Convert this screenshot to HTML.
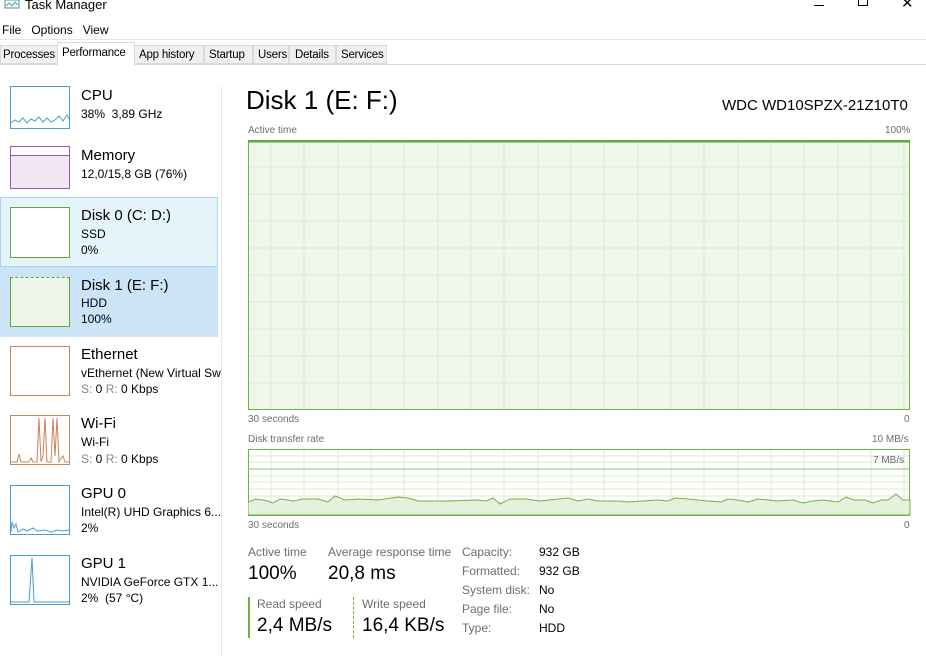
<!DOCTYPE html>
<html><head><meta charset="utf-8"><style>
*{margin:0;padding:0;box-sizing:border-box}
body{width:926px;height:667px;background:#fff;font-family:"Liberation Sans",sans-serif;color:#000;position:relative;overflow:hidden;font-size:12px}
.a{position:absolute;white-space:nowrap}
.tab{position:absolute;top:45px;height:19px;background:#f0f0f0;border:1px solid #d9d9d9;font-size:11.5px;padding:3px 0 0 2px;letter-spacing:-0.2px}
.box{position:absolute;left:10px;width:60px;height:43px;border:1px solid}
.t1{font-size:15px}
.t2{font-size:12px}
.g{color:#6d6d6d;font-size:11px}
</style></head><body>
<svg class="a" style="left:4px;top:0" width="16" height="10"><rect x="1" y="0" width="14" height="8" fill="none" stroke="#5a8ab0"/><polyline points="2,6 5,3 8,6 11,2 14,5" fill="none" stroke="#3a7" stroke-width="1"/></svg>
<div class="a" style="left:25px;top:-3px;font-size:13px">Task Manager</div>
<div class="a" style="left:814px;top:5px;width:10px;border-top:1px solid #000"></div>
<div class="a" style="left:858px;top:-4px;width:10px;height:10px;border:1px solid #000"></div>
<div class="a" style="left:901px;top:-6px;font-size:15px">✕</div>
<div class="a" style="left:2px;top:23px;font-size:12px">File&nbsp;&nbsp;&nbsp;Options&nbsp;&nbsp;&nbsp;View</div>
<div class="a" style="left:0;top:39px;width:926px;border-top:1px solid #e5e5e5"></div>
<div class="a" style="left:0;top:64px;width:926px;border-top:1px solid #d9d9d9"></div>
<div class="tab" style="left:0;width:58px">Processes</div>
<div class="tab" style="left:57px;top:42px;height:23px;width:78px;background:#fff;border-bottom:none;padding-top:4px;padding-left:4px">Performance</div>
<div class="tab" style="left:134px;width:70px;padding-left:4px">App history</div>
<div class="tab" style="left:204px;width:49px;padding-left:4px">Startup</div>
<div class="tab" style="left:253px;width:36px;padding-left:4px">Users</div>
<div class="tab" style="left:289px;width:47px;padding-left:5px">Details</div>
<div class="tab" style="left:336px;width:51px;padding-left:4px">Services</div>

<div class="a" style="left:221px;top:86px;height:570px;border-left:1px solid #e6e6e6"></div>
<div class="a" style="left:0;top:197px;width:218px;height:70px;background:#e5f3fb;border:1px solid #a8d3ee"></div>
<div class="a" style="left:0;top:267px;width:218px;height:70px;background:#cce4f7"></div>

<div class="box" style="top:86px;border-color:#4a9bd6;background:#fff"><svg width="58" height="41"><polyline points="0,36 4,33 8,35 12,31 16,36 20,32 24,34 28,30 32,35 36,31 40,35 44,33 48,29 52,34 56,28 58,32" fill="none" stroke="#4a9bd6"/></svg></div>
<div class="a t1" style="left:81px;top:87px">CPU</div><div class="a t2" style="left:81px;top:107px">38%&nbsp; 3,89 GHz</div>

<div class="box" style="top:146px;border-color:#a64dbd;background:#fff"><div style="position:absolute;left:0;right:0;top:8px;bottom:0;background:#f1e6f4;border-top:1px solid #a64dbd"></div></div>
<div class="a t1" style="left:81px;top:147px">Memory</div><div class="a t2" style="left:81px;top:167px">12,0/15,8 GB (76%)</div>

<div class="box" style="top:207px;border-color:#5ea83a;background:#fff;height:51px"></div>
<div class="a t1" style="left:81px;top:207px">Disk 0 (C: D:)</div><div class="a t2" style="left:81px;top:227px">SSD</div><div class="a t2" style="left:81px;top:243px">0%</div>

<div class="box" style="top:277px;border-color:#5ea83a;background:#eef6e9;height:50px;border-top:1px dashed #5ea83a"></div>
<div class="a t1" style="left:81px;top:277px">Disk 1 (E: F:)</div><div class="a t2" style="left:81px;top:296px">HDD</div><div class="a t2" style="left:81px;top:312px">100%</div>

<div class="box" style="top:346px;border-color:#c9845a;background:#fff;height:50px"></div>
<div class="a t1" style="left:81px;top:346px">Ethernet</div><div class="a t2" style="left:81px;top:366px;width:140px;overflow:hidden">vEthernet (New Virtual Switch)</div><div class="a t2" style="left:81px;top:382px"><span style="color:#888">S:</span> 0 <span style="color:#888">R:</span> 0 Kbps</div>

<div class="box" style="top:415px;border-color:#c9845a;background:#fff;height:50px"><svg width="58" height="48"><polyline points="0,46 6,46 8,38 10,46 18,46 20,42 22,46 26,46 28,2 30,46 32,40 34,2 36,46 40,46 42,2 44,40 46,2 48,46 52,40 54,46 58,46" fill="none" stroke="#c9845a"/></svg></div>
<div class="a t1" style="left:81px;top:415px">Wi-Fi</div><div class="a t2" style="left:81px;top:435px">Wi-Fi</div><div class="a t2" style="left:81px;top:452px"><span style="color:#888">S:</span> 0 <span style="color:#888">R:</span> 0 Kbps</div>

<div class="box" style="top:485px;border-color:#4a9bd6;background:#fff;height:50px"><svg width="58" height="48"><polyline points="0,46 1,36 3,42 5,38 7,46 12,43 16,45 22,42 26,45 34,44 40,46 46,44 52,45 58,44" fill="none" stroke="#4a9bd6"/></svg></div>
<div class="a t1" style="left:81px;top:485px">GPU 0</div><div class="a t2" style="left:81px;top:505px">Intel(R) UHD Graphics 6...</div><div class="a t2" style="left:81px;top:521px">2%</div>

<div class="box" style="top:555px;border-color:#4a9bd6;background:#fff;height:50px"><svg width="58" height="48"><polyline points="0,46 18,46 21,2 23,46 58,46" fill="none" stroke="#4a9bd6"/></svg></div>
<div class="a t1" style="left:81px;top:555px">GPU 1</div><div class="a t2" style="left:81px;top:575px">NVIDIA GeForce GTX 1...</div><div class="a t2" style="left:81px;top:591px">2%&nbsp; (57 °C)</div>

<div class="a" style="left:246px;top:85px;font-size:26px">Disk 1 (E: F:)</div>
<div class="a" style="left:722px;top:97px;font-size:15px">WDC WD10SPZX-21Z10T0</div>
<div class="a g" style="left:248px;top:125px;font-size:10px">Active time</div>
<div class="a g" style="left:885px;top:125px;font-size:10px">100%</div>
<svg class="a" style="left:248px;top:140px" width="663" height="271">
<rect x="0.5" y="0.5" width="661" height="269" fill="#eff7ea" stroke="#6db33f"/>
<g stroke="#dbead2">
<path d="M23 1V270M56 1V270M90 1V270M123 1V270M156 1V270M190 1V270M223 1V270M256 1V270M290 1V270M323 1V270M356 1V270M390 1V270M423 1V270M456 1V270M490 1V270M523 1V270M556 1V270M590 1V270M623 1V270M656 1V270"/>
<path d="M1 27H661M1 54H661M1 81H661M1 108H661M1 135H661M1 162H661M1 189H661M1 216H661M1 243H661"/>
</g>
<rect x="0.5" y="0.5" width="661" height="269" fill="none" stroke="#6db33f"/>
<line x1="0" y1="1.5" x2="662" y2="1.5" stroke="#5ea83a" stroke-width="2"/>
</svg>
<div class="a g" style="left:248px;top:414px;font-size:10px">30 seconds</div>
<div class="a g" style="left:904px;top:414px;font-size:10px">0</div>
<div class="a g" style="left:248px;top:434px;font-size:10px">Disk transfer rate</div>
<div class="a g" style="left:872px;top:434px;font-size:10px">10 MB/s</div>
<svg class="a" style="left:248px;top:449px" width="663" height="68">
<rect x="0.5" y="0.5" width="661" height="66" fill="#fff" stroke="#6db33f"/>
<g stroke="#dbead2"><path d="M23 1V66M56 1V66M90 1V66M123 1V66M156 1V66M190 1V66M223 1V66M256 1V66M290 1V66M323 1V66M356 1V66M390 1V66M423 1V66M456 1V66M490 1V66M523 1V66M556 1V66M590 1V66M623 1V66M656 1V66M1 7H661M1 13H661M1 27H661M1 33H661M1 40H661M1 47H661M1 54H661M1 60H661"/></g>
<line x1="0" y1="20" x2="662" y2="20" stroke="#8cc66a"/>
<polygon points="0,53 8,50 20,52 25,54 32,50 40,51 45,52 55,50 70,50 80,53 87,47 97,51 110,50 130,51 150,48 160,49 170,52 200,52 230,51 238,52 245,49 252,55 262,50 278,50 292,52 310,50 320,49 330,52 340,50 350,52 370,52 380,53 410,51 420,52 427,49 440,50 460,52 473,53 480,50 490,51 500,53 510,50 530,52 545,51 555,54 565,52 575,51 590,53 598,48 606,51 617,51 625,54 633,51 640,51 648,45 655,51 662,51 662,66 0,66" fill="#e4f1dc" stroke="#6db33f"/>
</svg>
<div class="a g" style="left:873px;top:455px;font-size:10px">7 MB/s</div>
<div class="a g" style="left:248px;top:520px;font-size:10px">30 seconds</div>
<div class="a g" style="left:904px;top:520px;font-size:10px">0</div>

<div class="a g" style="left:248px;top:545px;font-size:12px">Active time</div>
<div class="a" style="left:248px;top:563px;font-size:19px">100%</div>
<div class="a g" style="left:328px;top:545px;font-size:12px">Average response time</div>
<div class="a" style="left:328px;top:563px;font-size:19px">20,8 ms</div>
<div class="a" style="left:248px;top:597px;height:41px;border-left:2px solid #6db33f"></div>
<div class="a g" style="left:257px;top:597px;font-size:12px">Read speed</div>
<div class="a" style="left:257px;top:615px;font-size:19px">2,4 MB/s</div>
<div class="a" style="left:353px;top:597px;height:41px;border-left:1px dashed #6db33f"></div>
<div class="a g" style="left:362px;top:597px;font-size:12px">Write speed</div>
<div class="a" style="left:362px;top:615px;font-size:19px">16,4 KB/s</div>

<div class="a g" style="left:462px;top:543px;font-size:12px;line-height:19px">Capacity:<br>Formatted:<br>System disk:<br>Page file:<br>Type:</div>
<div class="a" style="left:539px;top:543px;font-size:12px;line-height:19px">932 GB<br>932 GB<br>No<br>No<br>HDD</div>
</body></html>
